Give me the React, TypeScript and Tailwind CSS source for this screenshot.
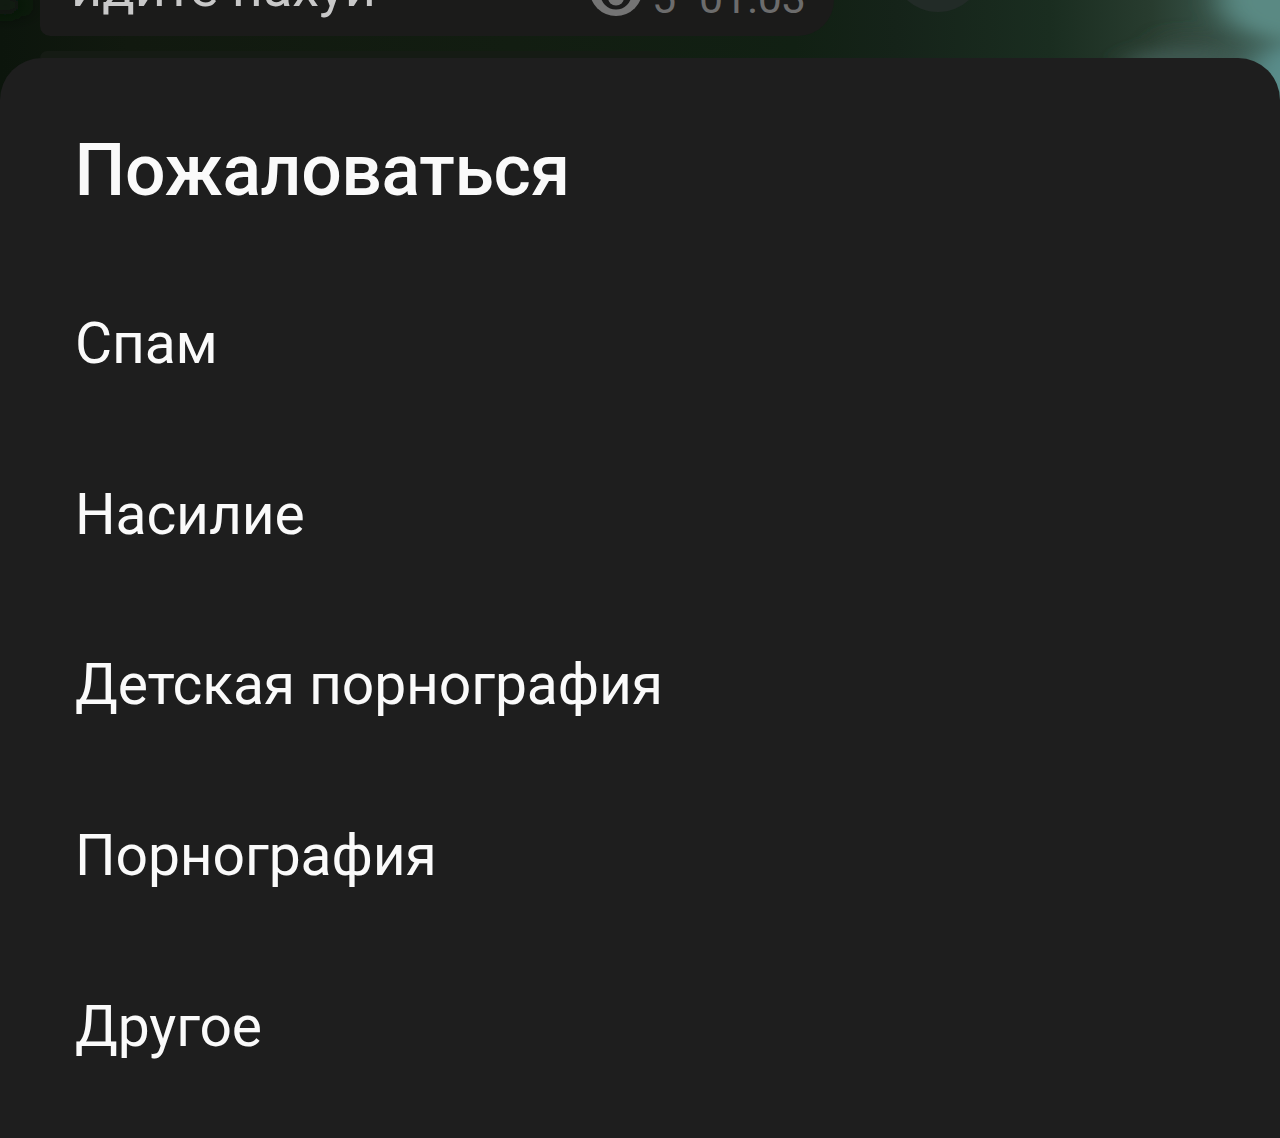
const reasons = ['Спам', 'Насилие', 'Детская порнография', 'Порнография', 'Другое'];

function Eye() {
  return (
    <svg className="h-11 w-[56px]" viewBox="0 0 56 44" fill="none">
      <circle cx="28" cy="15.5" r="26.5" fill="#747474" />
      <circle cx="28" cy="20" r="15.5" fill="#1b1b1b" />
      <circle cx="28" cy="23.5" r="8" fill="#747474" />
    </svg>
  );
}

function Wallpaper() {
  return (
    <svg className="absolute inset-0 h-[140px] w-full" viewBox="0 0 1280 140" preserveAspectRatio="none">
      <defs>
        <linearGradient id="forest" x1="0" x2="1" y1="0" y2="0">
          <stop offset="0" stopColor="#0c150c" />
          <stop offset="0.1" stopColor="#11190f" />
          <stop offset="0.4" stopColor="#121d11" />
          <stop offset="0.62" stopColor="#112013" />
          <stop offset="0.7" stopColor="#152319" />
          <stop offset="0.82" stopColor="#1a2d20" />
          <stop offset="0.9" stopColor="#283c2f" />
          <stop offset="1" stopColor="#456860" />
        </linearGradient>
        <filter id="soft" filterUnits="userSpaceOnUse" x="-60" y="-80" width="1440" height="300">
          <feGaussianBlur stdDeviation="15 8" />
        </filter>
      </defs>
      <rect width="1280" height="140" fill="url(#forest)" />
      <g filter="url(#soft)">
        <path d="M1222-40H1350V46L1270 38 1236 26 1220 8Z" fill="#5a8983" />
        <ellipse cx="1295" cy="84" rx="46" ry="40" fill="#5a8d8b" />
        <ellipse cx="1185" cy="62" rx="60" ry="13" fill="#415a53" />
        <ellipse cx="1195" cy="38" rx="40" ry="4" fill="#34473c" />
        <ellipse cx="5" cy="5" rx="16" ry="12" fill="#081c0d" />
      </g>
      <circle cx="938" cy="-34" r="46" fill="#222b27" />
    </svg>
  );
}

function Message() {
  return (
    <div className="relative ml-10 h-9 w-[794px] overflow-hidden rounded-bl-[14px] rounded-br-[50px] bg-[#1b1b1a]">
      <div className="-mt-[44px] flex h-[72px] items-start justify-between pl-[31px] pr-[28px]">
        <span className="text-[54px] leading-[64px] text-[#c8c8c8]">идите нахуй</span>
        <span className="flex items-start pt-4 text-[#6c6c6c]">
          <span className="-mr-[2px] pt-[2px]"><Eye /></span>
          <span className="w-[57px] pl-[10px] text-[43px] leading-[52px]">5</span>
          <span className="text-[43px] leading-[52px]">01:03</span>
        </span>
      </div>
    </div>
  );
}

export default function App() {
  return (
    <div className="relative flex h-[1138px] w-[1280px] flex-col overflow-hidden bg-[#101a10] font-['Roboto',sans-serif]">
      <Wallpaper />
      <Message />
      <div className="relative ml-10 mt-[15px] h-[7px] w-[620px] rounded-tl-[14px] bg-[#151b14]" />
      <section className="relative flex-1 rounded-t-[42px] bg-[#1e1e1e] pl-[74px] pt-[62px] text-[#fafafa]">
        <h1 className="pl-[0.5px] text-[71.5px] font-medium leading-[102px] tracking-[-0.35px]">Пожаловаться</h1>
        <ul className="mt-[36px] pl-[1px]">
          {reasons.map((reason) => (
            <li key={reason} className="h-[170.7px] text-[57px] leading-[171px] tracking-[-0.13px]">{reason}</li>
          ))}
        </ul>
      </section>
    </div>
  );
}
